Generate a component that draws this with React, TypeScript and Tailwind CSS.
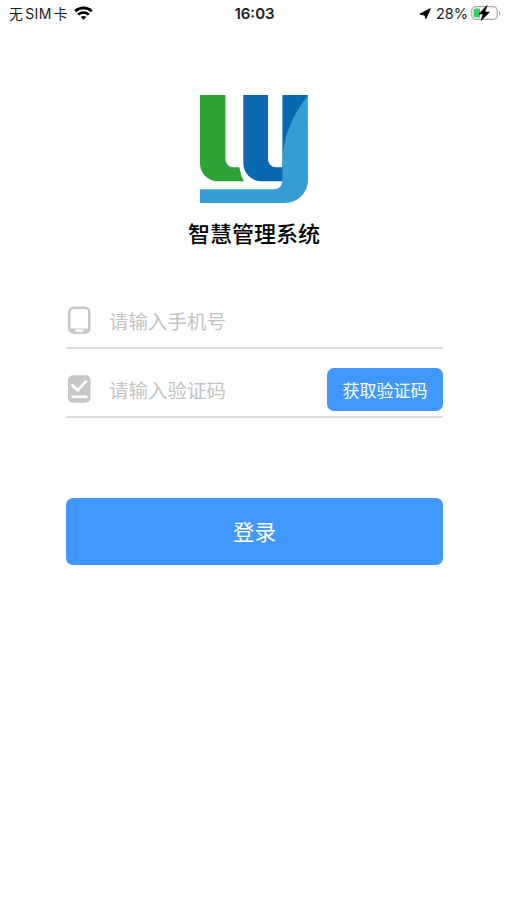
import { useState } from 'react'

function StatusBar() {
  return (
    <div className="h-7 pl-[9px] pr-[6px] grid grid-cols-3 items-center text-[14px] leading-7 text-[#1c1c1c]">
      <div className="flex items-center">
        <span className="tracking-[0.3px] whitespace-nowrap">无<span className="mx-[2px]">SIM</span>卡</span>
        <svg className="ml-[6px] w-[19px] h-[14px] -mt-[2px]" viewBox="0 0 19 14" fill="none" stroke="#000" strokeWidth="2.7">
          <path d="M1.2 5.2C5.8.8 13.2.8 17.8 5.2" />
          <path d="M4.2 8.6c2.900-2.800 7.700-2.800 10.600 0" />
          <path d="M6.700 10.900c1.600-1.300 4-1.300 5.600 0L9.500 13.800z" fill="#000" stroke="none" />
        </svg>
      </div>
      <div className="text-center font-semibold text-[15px] -ml-[1px]">16:03</div>
      <div className="flex items-center justify-end">
        <svg className="w-3 h-3 mr-[5px]" viewBox="0 0 12 12" fill="#000" stroke="#000" strokeLinejoin="round">
          <path d="M11.300.700 6.800 10.500 6 7.200.900 6z" />
        </svg>
        <span className="text-[14.500px]">28%</span>
        <svg className="ml-[3px] w-[30px] h-[16px] -mt-[2px]" viewBox="0 0 30 16">
          <rect x=".7" y="1.700" width="25.600" height="12.600" rx="4" fill="#fff" stroke="#a8a8a8" strokeWidth="1.200" />
          <path d="M28 5.700v4.600c1.700-.7 1.700-3.900 0-4.600z" fill="#a8a8a8" />
          <path d="M4.500 3.400H9v9.200H4.500A2 2 0 0 1 2.500 10.600V5.400a2 2 0 0 1 2-2z" fill="#35d160" />
          <path d="M16 .5 7.800 9h4.400l-2.200 6.500L18.600 7h-4.700z" fill="#000" stroke="#000" strokeWidth=".6" />
        </svg>
      </div>
    </div>
  )
}

function Logo() {
  return (
    <svg className="w-[108px] h-[108px]" viewBox="0 0 108 108">
      <path d="M0 0h25.500v64.500a7.800 7.800 0 0 0 7.800 7.800h6q1 7.500 4.700 14H18A18 18 0 0 1 0 68z" fill="#2ca438" />
      <path d="M43.300 0H68v64.500a7.800 7.800 0 0 0 7.800 7.800H82.400V0h25.400L96 86.300H61.500A18.200 18.200 0 0 1 43.300 68z" fill="#0868b0" />
      <path d="M107.800 1C92 20 82.400 43 82.400 70v15q0 9.300-9.400 9.300H0V108h85a23 23 0 0 0 23-23z" fill="#349dd3" />
    </svg>
  )
}

function PhoneIcon() {
  return (
    <svg className="w-[23px] h-7 shrink-0" viewBox="0 0 23 28">
      <rect x="1.300" y="1.800" width="20" height="25" rx="4.500" fill="none" stroke="#c8c8c8" strokeWidth="2.500" />
      <path d="M1.500 22.500h19.600v1.300a3 3 0 0 1-3 3H4.500a3 3 0 0 1-3-3z" fill="#c8c8c8" />
      <rect x="7.300" y="23.600" width="8" height="2.200" rx=".5" fill="#fff" />
    </svg>
  )
}

function CodeIcon() {
  return (
    <svg className="w-[23px] h-7 shrink-0" viewBox="0 0 23 28">
      <rect y=".3" width="22.500" height="27.500" rx="5" fill="#c8c8c8" />
      <path d="m3.500 9.500 6.200 6L18.800 5.500" fill="none" stroke="#fff" strokeWidth="2.600" />
      <path d="M3.500 21.800h16" stroke="#fff" strokeWidth="2.600" />
    </svg>
  )
}

const INPUT_CLASS =
  'ml-[18px] mt-[5px] flex-1 min-w-0 bg-transparent outline-none text-[19.500px] text-gray-800 placeholder:text-[#c3c3c3] placeholder:opacity-100'

export default function LoginPage() {
  const [phone, setPhone] = useState('')
  const [code, setCode] = useState('')

  return (
    <div className="min-h-screen bg-white font-['Inter','Noto_Sans_CJK_SC',sans-serif]">
      <StatusBar />

      <div className="pt-[67px] flex flex-col items-center">
        <Logo />
        <h1 className="mt-[15px] ml-[1px] text-[22px] leading-8 font-medium text-black">智慧管理系统</h1>
      </div>

      <form className="mt-[43px] ml-[66px] w-[377px]" onSubmit={(e) => e.preventDefault()}>
        {/* Phone number */}
        <div className="h-[56px] pl-[2px] flex items-center border-b-2 border-[#dcdcdc]">
          <PhoneIcon />
          <input
            className={INPUT_CLASS}
            placeholder="请输入手机号"
            value={phone}
            onChange={(e) => setPhone(e.target.value)}
          />
        </div>

        {/* Verification code */}
        <div className="h-[69px] pl-[2px] pt-[13px] flex items-center border-b-2 border-[#dcdcdc]">
          <CodeIcon />
          <input
            className={INPUT_CLASS}
            placeholder="请输入验证码"
            value={code}
            onChange={(e) => setCode(e.target.value)}
          />
          <button type="button" className="w-[116px] h-[43px] pt-[5px] shrink-0 rounded-[7px] bg-[#4098ff] text-white text-[17px]">
            获取验证码
          </button>
        </div>

        <button type="submit" className="mt-[80px] pt-[2px] w-full h-[67px] rounded-[7px] bg-[#4098ff] text-white text-[21.500px]">
          登录
        </button>
      </form>
    </div>
  )
}
